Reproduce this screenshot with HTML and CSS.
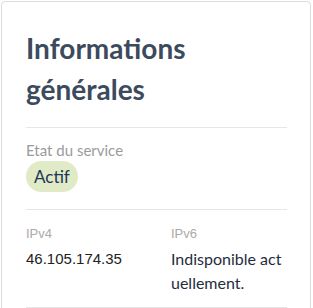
FILE: index.html
```html
<!DOCTYPE html>
<html lang="fr">
<head>
  <meta charset="UTF-8" />
  <title>Informations générales</title>
  <meta name="viewport" content="width=device-width, initial-scale=1.0" />
  <link rel="stylesheet" href="styles.css">
</head>
<body>

  <div class="info-card">
    <h2>Informations générales</h2>

    <div class="info-section info-status">
      <div class="info-label">Etat du service</div>
      <span class="status-badge">Actif</span>
    </div>

    <div class="info-section info-columns">
      <div class="info-col">
        <div class="info-label ip-label">IPv4</div>
        <div class="ip-value">46.105.174.35</div>
      </div>
      <div class="info-col">
        <div class="info-label ip-label">IPv6</div>
        <div class="ip-text">Indisponible actuellement.</div>
      </div>
    </div>
  </div>

</body>
</html>
```

FILE: styles.css
```css
/* Basic reset */
* {
  margin: 0;
  padding: 0;
  box-sizing: border-box;
}

body {
  font-family: Lato, "Open Sans", sans-serif;
  background: #fff;
  padding: 1px 2px 0 1px;
}

.info-card {
  border: 1px solid #dcdcdc;
  border-radius: 4px;
  padding: 26px 23px 40px 24px;
  background-color: #fff;
}

.info-card h2 {
  font-size: 28px;
  font-weight: 700;
  line-height: 41px;
  color: #3c4a5e;
  padding-bottom: 17px;
  border-bottom: 1px solid #e6e6e6;
}

.info-section {
  border-bottom: 1px solid #e6e6e6;
}

.info-status {
  display: flex;
  flex-direction: column;
  align-items: flex-start;
  padding: 12px 0 17px;
}

.info-label {
  font-size: 15px;
  color: #9a9a9a;
  line-height: 20px;
}

.status-badge {
  margin-top: 1px;
  padding: 0 8px;
  height: 31px;
  line-height: 31px;
  font-size: 17px;
  color: #1d3658;
  background-color: #e1eac6;
  border-radius: 16px;
}

.info-columns {
  display: grid;
  grid-template-columns: 145px 1fr;
  padding-top: 14px;
  padding-bottom: 12px;
}

.ip-label {
  font-family: "Liberation Sans", Arial, sans-serif;
  font-size: 13px;
  color: #ababab;
  margin-bottom: 3px;
}

.ip-value {
  font-family: "Liberation Sans", Arial, sans-serif;
  font-size: 15px;
  line-height: 24px;
  color: #222;
}

.ip-text {
  font-size: 16px;
  line-height: 24px;
  color: #1f2d3d;
  word-break: break-all;
}
```
